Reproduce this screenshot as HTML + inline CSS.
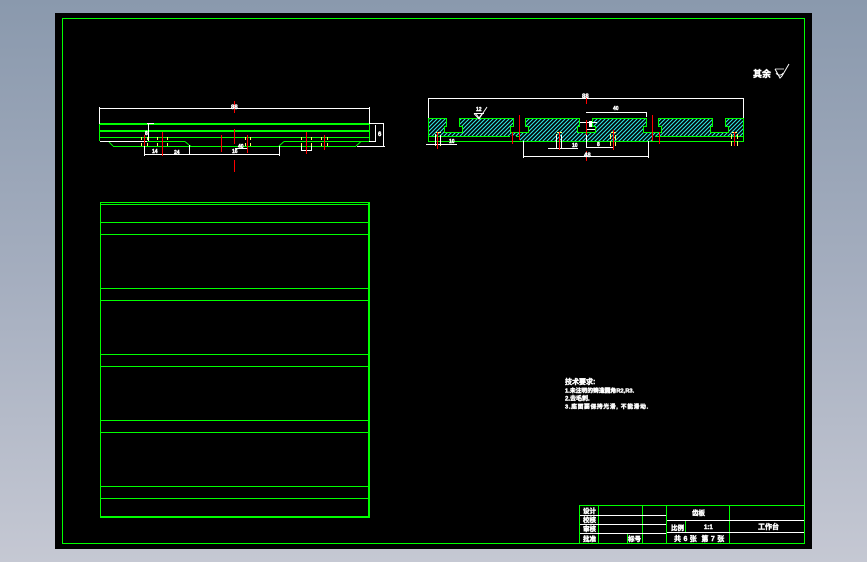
<!DOCTYPE html>
<html><head><meta charset="utf-8">
<style>
html,body{margin:0;padding:0;width:867px;height:562px;overflow:hidden;background:linear-gradient(to bottom,#8a99ad 0%,#a5aebf 50%,#c5c8d3 100%);}
svg{position:absolute;left:0;top:0;display:block;}
text{font-family:"Liberation Sans","Noto Sans CJK SC",sans-serif;font-weight:bold;fill:#fff;stroke:#fff;stroke-width:.4px;}
</style></head><body>
<svg width="867" height="562" viewBox="0 0 867 562" xmlns="http://www.w3.org/2000/svg">
<defs>
<pattern id="h" width="4" height="4" patternUnits="userSpaceOnUse">
<path d="M-1 1L1 -1M0 4L4 0M3 5L5 3" stroke="#2fe6e6" stroke-width="1.1" fill="none"/>
</pattern>
</defs>
<rect x="55" y="13" width="757" height="536" fill="#000"/>
<g shape-rendering="crispEdges">
<rect x="62.5" y="18.5" width="742" height="525" fill="none" stroke="#00ff00"/>

<!-- parts list table -->
<g fill="none" stroke="#00ff00">
<rect x="100.5" y="202.5" width="269" height="315"/>
<path d="M100 204.5H370M100 222.5H370M100 234.5H370M100 288.5H370M100 300.5H370M100 354.5H370M100 366.5H370M100 420.5H370M100 432.5H370M100 486.5H370M100 498.5H370M100 516.5H370M368.5 203V518"/>
</g>

<!-- title block -->
<g fill="none" stroke="#00ff00">
<path d="M579.5 505.5H804M579.5 505V543M598.5 505V543M642.5 505V543M666.5 505V543M729.5 505V543M627.5 533V543M685.5 520V532"/>
</g>
<path d="M580 515.5H666M580 524.5H666M580 533.5H666M667 520.5H804M667 532.5H804" stroke="#fff" fill="none"/>

<!-- left view green -->
<g fill="none" stroke="#00ff00">
<rect x="99" y="123" width="270" height="2" fill="#00ff00" stroke="none"/>
<rect x="99" y="130" width="270" height="2" fill="#00ff00" stroke="none"/>
<path d="M99.5 124V141M369.5 124V141M100 137.5H369M147 141.5H185M284 141.5H369M113 146.5H356M190 146V145"/>
</g>
</g>
<g fill="none" stroke="#00ff00" stroke-width="1">
<path d="M185 141.5L189 145M109 142L113 146M284 141.5L279 146M361 141.5L356 146"/>
</g>
<g shape-rendering="crispEdges">
<!-- left view white dims -->
<g fill="none" stroke="#fff">
<path d="M99.5 107V124M100 108.5H369M369.5 107V124M100 141.5H147M148.5 124V141M147 123.5H154M144.5 146V156M144 154.5H280M162.5 141V156M189.5 145V155M279.5 146V156M235 148.5H248M369 123.5H384M383.5 123V147M375.5 125V141M369 141.5H376M357 146.5H385M301.5 145V151M311.5 145V151M301 150.5H311"/>
</g>
<!-- left view yellow dashes -->
<g fill="none" stroke="#ffff66" stroke-dasharray="3 3">
<path d="M141.5 137V147M147.5 137V147M157.5 137V147M167.5 137V147M245.5 137V147M250.5 137V147M301.5 137V147M311.5 137V147M321.5 137V147M327.5 137V147"/>
</g>
<!-- left view red -->
<g fill="none" stroke="#f00">
<path d="M234.5 101V113M234.5 129V144M234.5 160V172M144.5 135V146M162.5 132V156M221.5 135V152M247.5 135V153M306.5 132V154M324.5 135V150"/>
</g>
</g>

<!-- section hatch -->
<path d="M429 119H446V126H444V132H462V126H459V119H513V126H510V132H528V126H525V119H579V126H577V132H595V126H592V119H646V126H643V132H661V126H658V119H712V126H710V132H728V126H725V119H743V136H652V141H520V136H429Z" fill="url(#h)"/>
<g shape-rendering="crispEdges">
<path d="M428.5 118.5H446.5V126.5H444.5V132.5H462.5V126.5H459.5V118.5H513.5V126.5H510.5V132.5H528.5V126.5H525.5V118.5H579.5V126.5H577.5V132.5H595.5V126.5H592.5V118.5H646.5V126.5H643.5V132.5H661.5V126.5H658.5V118.5H712.5V126.5H710.5V132.5H728.5V126.5H725.5V118.5H743.5V141.5H428.5Z" fill="none" stroke="#00ff00"/>
<path d="M428 136.5H510M516 136.5H520M655 136.5H743" stroke="#00ff00" fill="none"/>
<!-- right view yellow -->
<g fill="none" stroke="#ffff66">
<path d="M435.5 146V132.5H440.5V146" stroke-dasharray="5 2"/>
<path d="M556.5 146V132.5H561.5V146" stroke-dasharray="5 2"/>
<path d="M610.5 146V132.5H615.5V146" stroke-dasharray="5 2"/>
<path d="M731.5 146V132.5H737.5V146" stroke-dasharray="5 2"/>
</g>
<!-- right view white -->
<g fill="none" stroke="#fff">
<path d="M428.5 98V118M428 98.5H743M743.5 98V118M426 144.5H457M435.5 135V145M440.5 135V145M548 148.5H578M556.5 135V149M561.5 135V149M523.5 141V158M523 156.5H649M648.5 141V158M586 112.5H646M646.5 112V117M580 122.5H597M586 129.5H595M586.5 135V147M586 147.5H613M613.5 142V148M474 113.5H484"/>
</g>
<!-- right view red -->
<g fill="none" stroke="#f00">
<path d="M586.5 94V104M586.5 120V135M586.5 151V161M437.5 132V149M512.5 132V144M519.5 115V140M559.5 132V150M652.5 115V141M659.5 132V144M613.5 130V150M734.5 132V146"/>
</g>
</g>
<path d="M474 113.5L479 119L487 107" fill="none" stroke="#fff" stroke-width="1"/>
<path d="M476 113.5L479 118L482 113.5" fill="none" stroke="#fff" stroke-width=".8"/>

<!-- dim labels -->
<text x="231" y="109" font-size="6">88</text>
<text x="145" y="135" font-size="5">8</text>
<text x="152" y="153" font-size="5">14</text>
<text x="174" y="154" font-size="5">24</text>
<text x="238" y="148" font-size="5">40</text>
<text x="232" y="153" font-size="5">16</text>
<text x="378" y="136" font-size="6">6</text>
<text x="582" y="98" font-size="6">88</text>
<text x="476" y="111" font-size="5">12</text>
<text x="449" y="143" font-size="5">10</text>
<text x="572" y="147" font-size="5">10</text>
<text x="597" y="146" font-size="5">8</text>
<text x="613" y="110" font-size="5">40</text>
<text x="584" y="157" font-size="6">48</text>
<rect x="589" y="121" width="3" height="6" fill="#fff"/>

<!-- rough symbol -->
<text x="753" y="77" font-size="9">其余</text>
<path d="M775 69L780 78L782 76L789 64" fill="none" stroke="#fff" stroke-width="1"/>
<path d="M775 69H784M776 73A4 4 0 0 0 783 73" fill="none" stroke="#fff" stroke-width=".8"/>

<!-- technical notes -->
<text x="565" y="384" font-size="7">技术要求:</text>
<text x="565" y="392.5" font-size="5.8">1.未注明的铸造圆角R2,R3.</text>
<text x="565" y="400.5" font-size="6">2.去毛刺.</text>
<text x="565" y="408.5" font-size="5.8" letter-spacing=".65">3.底面要保持光滑, 不能滑动.</text>

<!-- title block text -->
<text x="583" y="513" font-size="6.5">设计</text>
<text x="583" y="522" font-size="6.5">校核</text>
<text x="583" y="531" font-size="6.5">审核</text>
<text x="583" y="541" font-size="6.5">批准</text>
<text x="628" y="541" font-size="6.5">标号</text>
<text x="692" y="515" font-size="6.5">齿板</text>
<text x="671" y="530" font-size="6.5">比例</text>
<text x="704" y="529" font-size="6">1:1</text>
<text x="758" y="529" font-size="7">工作台</text>
<text x="674" y="541" font-size="7" letter-spacing=".25">共 6 张&#160;&#160;第 7 张</text>
</svg>
</body></html>
